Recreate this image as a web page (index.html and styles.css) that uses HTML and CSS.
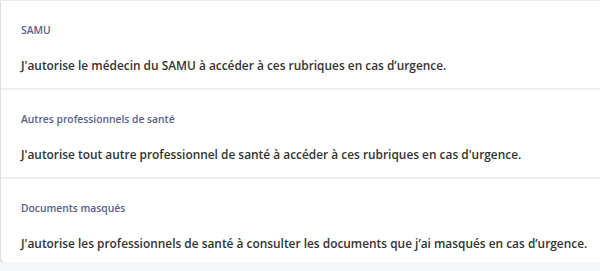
FILE: index.html
```html
<!DOCTYPE html>
<html lang="fr">
<head>
    <meta charset="UTF-8">
    <meta name="viewport" content="width=device-width, initial-scale=1.0">
    <title>Accès en cas d'urgence</title>
    <link rel="stylesheet" href="styles.css">
</head>
<body>

<div class="card">
    <div class="section">
        <p class="section-title">SAMU</p>
        <p class="section-text">J'autorise le médecin du SAMU à accéder à ces rubriques en cas d’urgence.</p>
    </div>
    <div class="section">
        <p class="section-title">Autres professionnels de santé</p>
        <p class="section-text">J'autorise tout autre professionnel de santé à accéder à ces rubriques en cas d'urgence.</p>
    </div>
    <div class="section">
        <p class="section-title">Documents masqués</p>
        <p class="section-text">J'autorise les professionnels de santé à consulter les documents que j’ai masqués en cas d’urgence.</p>
    </div>
</div>

</body>
</html>
```

FILE: styles.css
```css
body {
    font-family: "Open Sans", Arial, sans-serif;
    background-color: #f5f6fa;
    margin: 0;
    padding: 0 0 0 1px;
}

.card {
    background-color: white;
    border-top: 1px solid #ececf0;
    border-radius: 0 0 4px 4px;
    box-shadow: 0 1px 3px rgba(0, 0, 0, 0.25);
    margin-right: -4px;
}

.section {
    padding: 22px 8px 13px 20px;
    border-bottom: 2px solid #eeeef0;
}

.section:last-child {
    border-bottom: none;
    padding-bottom: 9px;
}

.section-title {
    margin: 0 0 18px;
    font-size: 10.3px;
    line-height: 14px;
    font-weight: 600;
    color: #55618a;
}

.section-text {
    margin: 0;
    font-size: 11.9px;
    line-height: 20px;
    font-weight: 600;
    color: #333333;
    white-space: nowrap;
}
```
